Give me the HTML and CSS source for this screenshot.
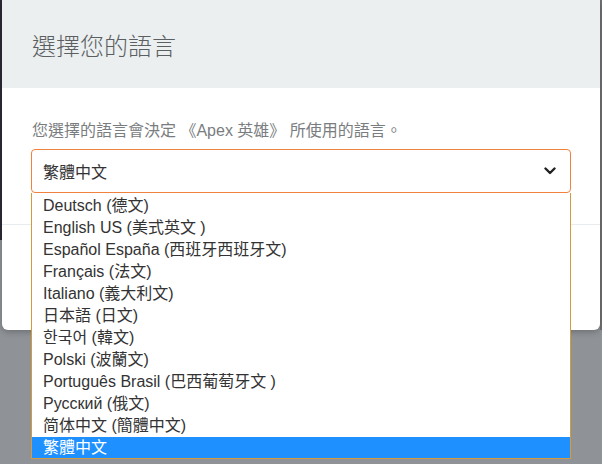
FILE: index.html
```html
<!DOCTYPE html>
<html lang="zh-Hant">
<head>
    <meta charset="UTF-8">
    <meta name="viewport" content="width=device-width, initial-scale=1.0">
    <title>選擇您的語言</title>
    <link rel="stylesheet" href="styles.css">
</head>
<body>
    <div class="modal">
        <div class="modal-header">
            <h2>選擇您的語言</h2>
        </div>
        <div class="modal-body">
            <p>您選擇的語言會決定 《Apex 英雄》 所使用的語言。</p>
            <div class="select-wrap">
                <div class="select">
                    <span>繁體中文</span>
                    <svg class="chevron" width="12" height="8" viewBox="0 0 12 8">
                        <polyline points="1.5,1.5 6,6 10.5,1.5" fill="none" stroke="#222" stroke-width="2.4" stroke-linecap="round" stroke-linejoin="round"/>
                    </svg>
                </div>
                <ul class="options">
                    <li>Deutsch (德文)</li>
                    <li>English US (美式英文 )</li>
                    <li>Español España (西班牙西班牙文)</li>
                    <li>Français (法文)</li>
                    <li>Italiano (義大利文)</li>
                    <li>日本語 (日文)</li>
                    <li>한국어 (韓文)</li>
                    <li>Polski (波蘭文)</li>
                    <li>Português Brasil (巴西葡萄牙文 )</li>
                    <li>Русский (俄文)</li>
                    <li>简体中文 (簡體中文)</li>
                    <li class="selected">繁體中文</li>
                </ul>
            </div>
        </div>
        <div class="modal-footer"></div>
    </div>
</body>
</html>
```

FILE: styles.css
```css
body {
    margin: 0;
    background-color: #8f9397;
    background-image:
        linear-gradient(#2c2a35, #2c2a35),
        linear-gradient(#707274, #707274);
    background-repeat: no-repeat;
    background-size: 2px 240px, 2px 330px;
    background-position: 0 0, 600px 0;
    font-family: "Liberation Sans", "Noto Sans CJK TC", sans-serif;
    min-height: 464px;
}
.modal {
    margin-left: 2px;
    width: 598px;
    background: #fff;
    border-radius: 0 0 6px 6px;
    box-shadow: 0 2px 6px rgba(0, 0, 0, 0.25);
}
.modal-header {
    height: 88px;
    display: flex;
    align-items: center;
    padding-left: 30px;
    background: #ebeff0;
}
.modal-header h2 {
    margin: 0;
    font-family: "Noto Sans CJK TC", sans-serif;
    font-size: 24px;
    font-weight: 300;
    color: #5b5f62;
}
.modal-body {
    padding: 31px 29px 31px;
}
.modal-body p {
    margin: 0 0 6px;
    line-height: 24px;
    font-size: 16px;
    color: #7a7d80;
    padding-left: 1px;
}
.select-wrap {
    position: relative;
}
.select {
    height: 44px;
    box-sizing: border-box;
    border: 1px solid #f0823f;
    border-radius: 4px;
    display: flex;
    align-items: center;
    justify-content: space-between;
    padding: 0 14px 0 11px;
    font-size: 16px;
    color: #333;
}
.options {
    position: absolute;
    top: 44px;
    left: 0;
    right: 0;
    margin: 0;
    padding: 2px 0 0;
    list-style: none;
    background: #fff;
    border: 1px solid #d39b3b;
    border-top: none;
    z-index: 2;
}
.options li {
    height: 22px;
    line-height: 22px;
    padding-left: 11px;
    font-size: 16px;
    color: #333;
}
.options li.selected {
    height: 21px;
    line-height: 21px;
    background: #1e90ff;
    color: #fff;
}
.modal-footer {
    height: 105px;
    border-top: 1px solid #e9ecee;
}
```
